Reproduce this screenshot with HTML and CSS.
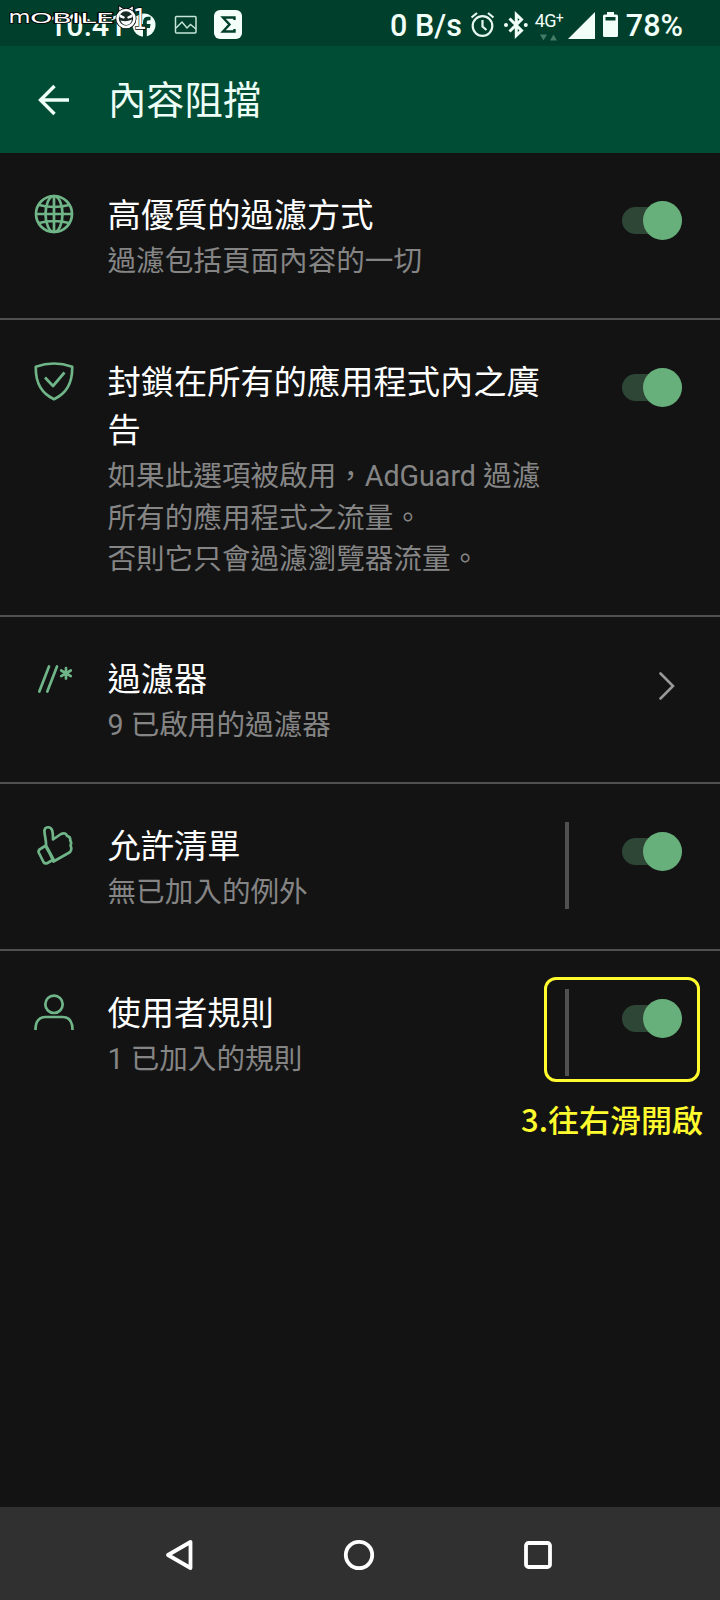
FILE: index.html
```html
<!DOCTYPE html>
<html lang="zh-Hant">
<head>
<meta charset="utf-8">
<title>內容阻擋</title>
<link rel="stylesheet" href="styles.css">
</head>
<body>
<div class="screen">
  <header class="status">
    <div class="status-left">
      <span class="clock">10:41</span>
      <svg class="fb" width="24" height="24" viewBox="0 0 24 24"><circle cx="12" cy="12" r="11.5" fill="#f2fff9"/><path d="M11 24v-9H7.5v-4H11V9c0-3.500 2-5.200 5-5.200h2.500v3.500h-1.700c-1.500 0-2 .7-2 1.900V11h3.700l-.6 4h-3.100v9z" fill="#003f2b"/></svg>
      <svg class="pic" width="24" height="20" viewBox="0 0 24 20" fill="none" stroke="#c5e6d8" stroke-width="1.500"><rect x="1.500" y="1.500" width="20.500" height="16.500" rx="1"/><path d="M2 13l6-6 5 6 3.500-3.500L22 14"/></svg>
      <svg class="sigma" width="28" height="29" viewBox="0 0 28 29"><rect width="28" height="29" rx="6" fill="#f4fffa"/><path d="M20.500 10V7.500H9l6.500 7L9 21.500h11.500V19" fill="none" stroke="#003f2b" stroke-width="2.400"/></svg>
    </div>
    <div class="status-right">
      <span class="rate">0 B/s</span>
      <svg class="alarm" width="25" height="27" viewBox="0 0 25 27" fill="none" stroke="#e6f7ef" stroke-width="2.200"><circle cx="12.500" cy="15" r="9.800"/><path d="M12.500 9v6.500l4 3.500M1.500 6.500L7 2M23.500 6.500L18 2"/></svg>
      <svg class="bt" width="24" height="28" viewBox="0 0 24 28"><path d="M5.500 7.500L17.500 19.500 12.300 24.500V3.500L17.500 8.500 5.500 20.500" fill="none" stroke="#f2fff9" stroke-width="3"/><circle cx="2" cy="14" r="2" fill="#f2fff9"/><circle cx="21.800" cy="14" r="2" fill="#f2fff9"/></svg>
      <div class="net"><span class="net-label">4G<sup>+</sup></span>
        <svg width="18" height="7" viewBox="0 0 18 7" fill="#437b66"><path d="M0 .5h7L3.500 6.500zM10 6.500h7L13.500.5z"/></svg></div>
      <svg class="signal" width="27" height="27" viewBox="0 0 27 27"><path d="M27 0v27H0z" fill="#f2fff9"/></svg>
      <svg class="battery" width="15" height="25" viewBox="0 0 15 25"><path fill-rule="evenodd" d="M4 0h7v2.500h2.500Q15 2.500 15 4v19.500q0 1.500-1.500 1.500h-12Q0 25 0 23.500V4q0-1.500 1.500-1.500H4zM2.500 5v3.500h10V5z" fill="#f2fff9"/></svg>
      <span class="pct">78%</span>
    </div>
    <svg class="watermark" width="160" height="40" viewBox="0 0 160 40">
      <text x="8.500" y="23" font-size="17" textLength="22" lengthAdjust="spacingAndGlyphs">m</text>
      <text x="30" y="23" font-size="13.500" textLength="84" lengthAdjust="spacingAndGlyphs">OBILE</text>
      <path d="M119 12l-.5-6.500 5 3h5l5-3-.5 6.500z" fill="#fff" stroke="#000" stroke-width="1"/>
      <circle cx="126" cy="18.500" r="10.500" fill="#000"/>
      <circle cx="126" cy="18.500" r="8.500" fill="#1a2a24" stroke="#fff" stroke-width="2.600"/>
      <path d="M119.500 14l5.500 3-1 1.800-4.500-1.500zM132.500 14l-5.500 3 1 1.800 4.500-1.500zM120.500 20.500q6 2 11.500-1-1 5-5.500 5.500-4 0-6-4.500z" fill="#fff"/>
      <text x="133" y="29" font-size="29" textLength="14" lengthAdjust="spacingAndGlyphs">1</text>
    </svg>
  </header>

  <div class="toolbar">
    <svg class="back" width="34" height="32" viewBox="0 0 34 32" fill="none" stroke="#edfff7" stroke-width="3.400"><path d="M17.500 2L3.500 16l14 14M3.500 16H32"/></svg>
    <h1>內容阻擋</h1>
  </div>

  <main>
    <section class="row">
      <svg class="icon" width="40" height="40" viewBox="0 0 40 40"><circle cx="20" cy="20" r="18"/><ellipse cx="20" cy="20" rx="8.500" ry="18"/><path d="M2 20h36M5 11q15 4 30 0M5 29q15-4 30 0M20 2v36"/></svg>
      <div class="text"><h2>高優質的過濾方式</h2><p>過濾包括頁面內容的一切</p></div>
      <div class="switch"><i></i></div>
    </section>
    <section class="row tall">
      <svg class="icon" width="40" height="40" viewBox="0 0 40 40"><path d="M1.800 5.800Q20-.8 38.200 5.800C38.500 22 33 32 20 38.200 7 32 1.500 22 1.800 5.800zM11 16.500l8 8.500L30.500 11.500"/></svg>
      <div class="text"><h2>封鎖在所有的應用程式內之廣告</h2><p>如果此選項被啟用，AdGuard 過濾所有的應用程式之流量。<br>否則它只會過濾瀏覽器流量。</p></div>
      <div class="switch"><i></i></div>
    </section>
    <section class="row">
      <svg class="icon" width="40" height="40" viewBox="0 0 40 40"><path d="M5.300 33.500L15 8.500M13.300 33.500L23 8.500M32 10v10.600M27.200 12.500l9.600 5.600M36.800 12.500l-9.600 5.600" stroke-linecap="round"/></svg>
      <div class="text"><h2>過濾器</h2><p>9 已啟用的過濾器</p></div>
      <svg class="chevron" width="18" height="30" viewBox="0 0 18 30"><path d="M2.500 2.500L15 15 2.500 27.500" fill="none" stroke="#999" stroke-width="2.600" stroke-linecap="round"/></svg>
    </section>
    <section class="row">
      <svg class="icon" width="40" height="40" viewBox="0 0 40 40"><path d="M12 20.500C12.500 15 10 9 10.500 5.500c.3-4 6-4.500 7.500-.5 1 3 1 6 1 9.500l8-5.500c3-1.500 5.500-.5 6 2 2.700.5 3.500 2.500 3.200 4.500C37.500 17 37.200 19 36.500 20.500c1.500 3 .8 6-2 7.500L19.500 36.500zM12 20.500l-5 3c-2 1-3 2-2.300 4L9.500 37c1 1.800 2.800 1.700 4 1l6-3.500zM11.500 21l8 14"/></svg>
      <div class="text"><h2>允許清單</h2><p>無已加入的例外</p></div>
      <div class="bar"></div>
      <div class="switch"><i></i></div>
    </section>
    <section class="row last">
      <svg class="icon" width="40" height="40" viewBox="0 0 40 40"><circle cx="20" cy="12.300" r="8.700"/><path d="M1.500 38C1.500 29.500 5 25 11.500 25h17C35 25 38.500 29.500 38.500 38"/></svg>
      <div class="text"><h2>使用者規則</h2><p>1 已加入的規則</p></div>
      <div class="bar"></div>
      <div class="switch"><i></i></div>
      <div class="highlight"></div>
      <div class="note">3.往右滑開啟</div>
    </section>
  </main>

  <nav>
    <svg width="32" height="32" viewBox="0 0 32 32"><path d="M26.500 3v26L4 16z"/></svg>
    <svg width="32" height="32" viewBox="0 0 32 32"><circle cx="16" cy="16" r="13.200"/></svg>
    <svg width="32" height="32" viewBox="0 0 32 32"><rect x="4" y="4" width="24" height="24" rx="2.500"/></svg>
  </nav>
</div>
</body>
</html>
```
FILE: styles.css
```css
* { box-sizing: border-box; margin: 0; padding: 0; }
body { background: #131313; font-family: Roboto, "Noto Sans CJK TC", sans-serif; }
svg { display: block; flex: none; }
.screen { width: 720px; height: 1600px; display: flex; flex-direction: column; overflow: hidden; background: #131313; }

.status { position: relative; height: 46px; flex: none; background: #003f2b; color: #f2fff9; display: flex; justify-content: space-between; }
.status-left, .status-right { display: flex; align-items: flex-start; }
.status-left { padding-left: 49px; }
.status-right { padding-right: 37px; }
.clock, .rate, .pct { font-size: 30.500px; line-height: 34px; font-weight: 500; margin-top: 9px; white-space: nowrap; }
.clock { width: 83px; }
.fb { margin-top: 13px; }
.pic { margin: 15px 0 0 18px; }
.sigma { margin: 10px 0 0 16px; }
.alarm { margin: 11px 0 0 8px; }
.bt { margin: 11px 0 0 9px; }
.net { width: 32px; margin: 12px 0 0 7px; }
.net-label { display: block; height: 22px; font-size: 18px; line-height: 18px; letter-spacing: -.8px; font-weight: 400; white-space: nowrap; }
.net-label sup { font-size: 14px; line-height: 1px; vertical-align: 4px; }
.net svg { margin-left: 5px; }
.signal { margin: 12px 0 0 1px; }
.battery { margin: 12px 0 0 8px; }
.pct { margin-left: 8px; }
.watermark { position: absolute; left: 0; top: 0; }
.watermark text { font-family: "DejaVu Sans", sans-serif; fill: #fff; stroke: #000; stroke-width: 1.500px; paint-order: stroke; }

.toolbar { height: 107px; flex: none; background: #004d35; display: flex; align-items: center; padding-left: 37px; color: #edfff7; }
.toolbar h1 { font-size: 38.300px; line-height: 56px; font-weight: 400; margin-left: 37px; padding-top: 2px; }

main { flex: 1; }
.row { position: relative; height: 167px; display: flex; align-items: flex-start; padding: 38px 38px 0 34px; border-bottom: 2px solid #505050; }
.tall { height: 297px; }
.last { border-bottom: 0; }
.icon { margin: 3px 0 0 -.5px; fill: none; stroke: #6fb588; stroke-width: 2.700; stroke-linejoin: round; }
.text { width: 436px; margin: 1px 0 0 34px; flex: none; }
.text h2 { font-size: 33.250px; line-height: 48px; font-weight: 400; color: #fff; }
.text p { margin-top: 1px; font-size: 28.600px; line-height: 41.500px; color: #858585; }
.switch { position: relative; width: 60px; height: 27px; margin: 16px 0 0 auto; border-radius: 14px; background: #2e4635; }
.switch i { position: absolute; right: 0; top: -6px; width: 39px; height: 39px; border-radius: 50%; background: #67af7b; }
.bar { width: 4px; height: 87px; margin: 0 0 0 21.500px; background: #505050; }
.chevron { margin: 16px 6px 0 auto; }
.highlight { position: absolute; left: 544px; top: 26px; width: 156px; height: 105px; border: 3px solid #fffb2e; border-radius: 12px; }
.note { position: absolute; right: 17px; top: 146px; font-family: "Noto Sans CJK TC", sans-serif; font-size: 31px; line-height: 44px; font-weight: 500; color: #fffb2e; white-space: nowrap; }

nav { height: 93px; flex: none; background: #303030; display: flex; justify-content: center; align-items: center; gap: 147px; padding: 2px 3px 0 0; }
nav svg { fill: none; stroke: #fff; stroke-width: 3.800; stroke-linejoin: round; }
```
